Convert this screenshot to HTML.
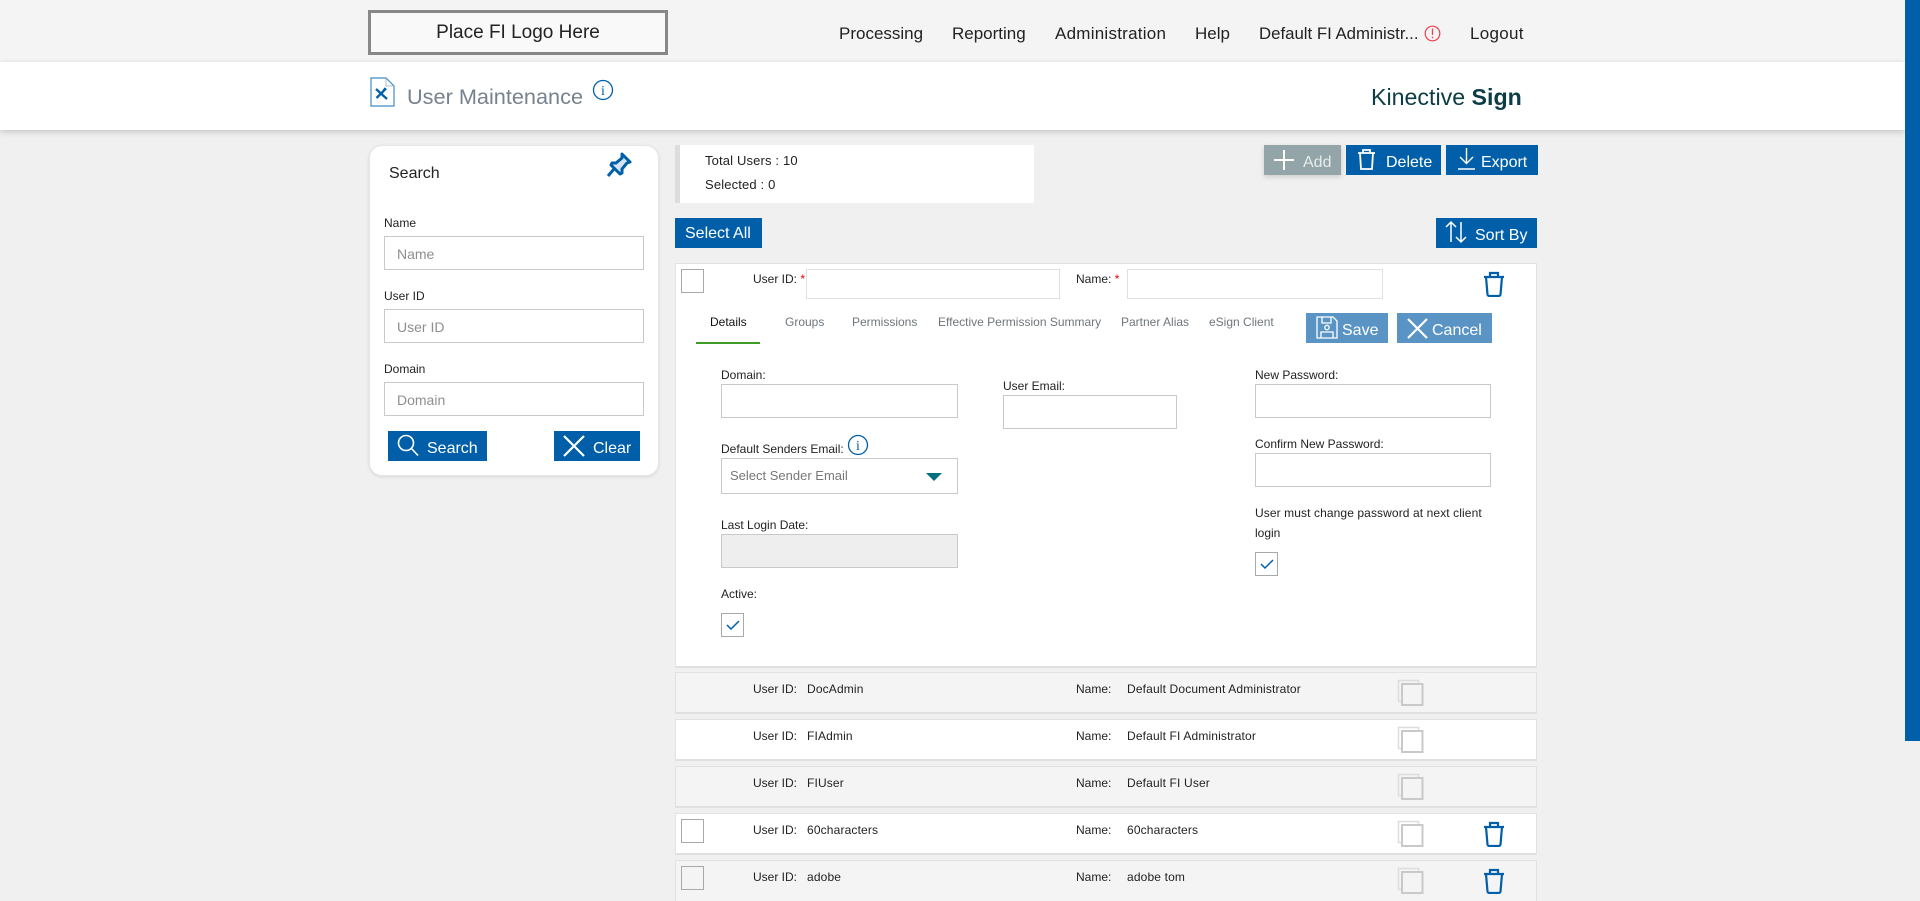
<!DOCTYPE html>
<html><head><meta charset="utf-8"><title>User Maintenance</title>
<style>
html,body{margin:0;padding:0;width:1920px;height:901px;overflow:hidden;background:#f0f0f0}
body{position:relative;font-family:"Liberation Sans",sans-serif;color:#222}
.a,.t,.in,.btn,.row,.cb,svg.i{position:absolute}
.t{white-space:nowrap;line-height:16px;font-size:12px;color:#222}
.in{box-sizing:border-box;background:#fff;border:1px solid #c9c9c9}
.in2{border:1px solid #e0e0e0}
.btn{background:#005fa8;color:#fff;font-size:16px;line-height:30px;height:30px;white-space:nowrap}
.btn span{position:absolute;top:3px;white-space:nowrap}
.row{left:675px;width:862px;height:42px;box-sizing:border-box;border:1px solid #e2e2e2;border-bottom:2px solid #e0e0e0;background:#fff}
.g{background:#f4f4f4}
.cb{box-sizing:border-box;width:23px;height:24px;border:1px solid #a9a9a9;background:transparent}
.star{color:#e00;font-size:12px}
.tab{color:#6f767c;font-size:12px}
.ph{color:#8f8f8f;font-size:14px}
.nav{font-size:17px;color:#222;top:26px}
.v{letter-spacing:.15px}
</style></head><body>
<div class="a" style="left:0;top:0;width:1905px;height:62px;background:#f4f4f4"></div>
<div class="a" style="left:0;top:62px;width:1905px;height:68px;background:#fff;box-shadow:0 2px 6px rgba(0,0,0,.18)"></div>
<div class="a" style="left:1905px;top:0;width:15px;height:741px;background:#005fa8"></div>

<div class="a" style="left:368px;top:10px;width:300px;height:45px;box-sizing:border-box;border:3px solid #888;background:#f9f9f9;text-align:center;font-size:19px;line-height:40px;color:#222">Place FI Logo Here</div>
<div class="t nav" style="left:839px">Processing</div>
<div class="t nav" style="left:952px">Reporting</div>
<div class="t nav" style="left:1055px;letter-spacing:.25px">Administration</div>
<div class="t nav" style="left:1195px">Help</div>
<div class="t nav" style="left:1259px;font-size:16.8px">Default FI Administr...</div>
<svg class="i" style="left:1424px;top:25px" width="17" height="17" viewBox="0 0 17 17"><circle cx="8.500" cy="8.500" r="7.300" fill="none" stroke="#f0404a" stroke-width="1.200"/><path d="M8.500 3.500v6.500M8.500 11.700v1.600" stroke="#f0404a" stroke-width="1.300"/></svg>
<div class="t nav" style="left:1470px;letter-spacing:.3px">Logout</div>

<svg class="i" style="left:370px;top:77px" width="25" height="30" viewBox="0 0 25 30"><path d="M1 1h15l8 8v20H1z" fill="#fff" stroke="#3f8ec9" stroke-width="1.200"/><path d="M16 1v8h8" fill="none" stroke="#9ab" stroke-width=".8"/><path d="M6 12l11 10M6.500 21L16 11.500M12 16l3.500-5" stroke="#005fa8" stroke-width="2.300"/></svg>
<div class="t" style="left:407px;top:84px;font-size:21.700px;line-height:26px;color:#76838d">User Maintenance</div>
<svg class="i" style="left:592px;top:79px" width="22" height="22" viewBox="0 0 22 22"><circle cx="11" cy="11" r="9.500" fill="none" stroke="#005fa8" stroke-width="1.300"/><text x="11" y="16" text-anchor="middle" font-family="Liberation Serif" font-size="14" fill="#005fa8">i</text></svg>
<div class="t" style="left:1371px;top:83px;font-size:23.200px;line-height:28px;color:#0c3c46">Kinective <b>Sign</b></div>

<!-- search -->
<div class="a" style="left:369px;top:145px;width:290px;height:331px;box-sizing:border-box;background:#fff;border:1px solid #e6e6e6;border-radius:13px;box-shadow:0 1px 3px rgba(0,0,0,.1)"></div>
<div class="t" style="left:389px;top:165px;font-size:16px;margin-top:1px">Search</div>
<svg class="i" style="left:605px;top:151px" width="28" height="28" viewBox="0 0 28 28"><path d="M17 3l8 8-3 1-5 6 0 4-2 1-9-9 1-2 4 0 6-5zM9 18l-6 7" fill="#d5e4f0" stroke="#005fa8" stroke-width="3" stroke-linejoin="round"/></svg>
<div class="t" style="left:384px;top:215px">Name</div>
<div class="in" style="left:384px;top:236px;width:260px;height:34px"></div>
<div class="t ph" style="left:397px;top:246px">Name</div>
<div class="t" style="left:384px;top:288px">User ID</div>
<div class="in" style="left:384px;top:309px;width:260px;height:34px"></div>
<div class="t ph" style="left:397px;top:319px">User ID</div>
<div class="t" style="left:384px;top:361px">Domain</div>
<div class="in" style="left:384px;top:382px;width:260px;height:34px"></div>
<div class="t ph" style="left:397px;top:392px">Domain</div>
<div class="btn" style="left:388px;top:431px;width:99px"><svg class="i" style="left:8px;top:2px" width="24" height="24" viewBox="0 0 24 24"><circle cx="10" cy="10" r="7.500" fill="none" stroke="#fff" stroke-width="1.600"/><path d="M15.500 15.500l6.500 7" stroke="#fff" stroke-width="1.600"/></svg><span style="left:39px">Search</span></div>
<div class="btn" style="left:554px;top:431px;width:86px"><svg class="i" style="left:9px;top:4px" width="22" height="22" viewBox="0 0 22 22"><path d="M1 1l20 20M21 1L1 21" stroke="#fff" stroke-width="2.200"/></svg><span style="left:39px">Clear</span></div>

<!-- stats -->
<div class="a" style="left:675px;top:145px;width:359px;height:58px;box-sizing:border-box;background:#fff;border-left:5px solid #ddd"></div>
<div class="t" style="left:705px;top:152px;font-size:13px;letter-spacing:.15px;margin-top:1px">Total Users : 10</div>
<div class="t" style="left:705px;top:176px;font-size:13px;letter-spacing:.15px;margin-top:1px">Selected : 0</div>

<div class="btn" style="left:1264px;top:145px;width:77px;background:#93a5a8;box-shadow:0 2px 5px rgba(0,0,0,.15)"><svg class="i" style="left:9px;top:4px" width="22" height="22" viewBox="0 0 22 22"><path d="M11 1v20M1 11h20" stroke="#fff" stroke-width="2"/></svg><span style="left:39px;color:#e6ecec">Add</span></div>
<div class="btn" style="left:1346px;top:145px;width:95px"><svg class="i" style="left:11px;top:3px" width="19" height="23" viewBox="0 0 19 23"><path d="M3 5l1 16h11l1-16M1 5h17M6 5V2h7v3" fill="none" stroke="#fff" stroke-width="1.800"/></svg><span style="left:40px">Delete</span></div>
<div class="btn" style="left:1446px;top:145px;width:92px"><svg class="i" style="left:11px;top:2px" width="19" height="24" viewBox="0 0 19 24"><path d="M9.500 1v15M3 10l6.500 6.500L16 10M1 22h17" fill="none" stroke="#fff" stroke-width="1.400"/></svg><span style="left:35px">Export</span></div>
<div class="btn" style="left:675px;top:218px;width:87px"><span style="left:10px;top:1px">Select All</span></div>
<div class="btn" style="left:1436px;top:218px;width:101px"><svg class="i" style="left:9px;top:2px" width="22" height="24" viewBox="0 0 22 24"><path d="M6 22V2M1 7l5-5 5 5M16 2v20M11 17l5 5 5-5" fill="none" stroke="#fff" stroke-width="1.500"/></svg><span style="left:39px">Sort By</span></div>

<!-- edit card -->
<div class="a" style="left:675px;top:263px;width:862px;height:405px;box-sizing:border-box;background:#fff;border:1px solid #e2e2e2;border-bottom:2px solid #e0e0e0"></div>
<div class="cb" style="left:681px;top:269px"></div>
<div class="t" style="left:753px;top:271px">User ID: <span class="star">*</span></div>
<div class="in in2" style="left:806px;top:269px;width:254px;height:30px"></div>
<div class="t" style="left:1076px;top:271px">Name: <span class="star">*</span></div>
<div class="in in2" style="left:1127px;top:269px;width:256px;height:30px"></div>
<svg class="i" style="left:1483px;top:271px" width="22" height="26" viewBox="0 0 22 26"><path d="M3 6l1.500 17.500c0 1 1 1.500 2 1.500h9c1 0 2-.5 2-1.500L19 6M1 6h20M7 6V2h8v4" fill="none" stroke="#005fa8" stroke-width="2.200"/></svg>

<div class="t" style="left:710px;top:314px;color:#111">Details</div>
<div class="t tab" style="left:785px;top:314px">Groups</div>
<div class="t tab" style="left:852px;top:314px">Permissions</div>
<div class="t tab" style="left:938px;top:314px">Effective Permission Summary</div>
<div class="t tab" style="left:1121px;top:314px">Partner Alias</div>
<div class="t tab" style="left:1209px;top:314px">eSign Client</div>
<div class="a" style="left:696px;top:342px;width:64px;height:2px;background:#3f9a26"></div>

<div class="btn" style="left:1306px;top:313px;width:82px;background:#5a94c5"><svg class="i" style="left:10px;top:3px" width="22" height="23" viewBox="0 0 22 23"><path d="M1 1h16l4 4v17H1zM6 1v6h9V1M5 22v-6h12v6" fill="none" stroke="#fff" stroke-width="1.300"/><circle cx="11" cy="11.500" r="2.200" fill="none" stroke="#fff" stroke-width="1.300"/></svg><span style="left:36px">Save</span></div>
<div class="btn" style="left:1397px;top:313px;width:95px;background:#5a94c5"><svg class="i" style="left:10px;top:5px" width="21" height="21" viewBox="0 0 21 21"><path d="M1 1l19 19M20 1L1 20" stroke="#fff" stroke-width="2.200"/></svg><span style="left:35px">Cancel</span></div>

<div class="t" style="left:721px;top:367px">Domain:</div>
<div class="in" style="left:721px;top:384px;width:237px;height:34px"></div>
<div class="t" style="left:1003px;top:378px">User Email:</div>
<div class="in" style="left:1003px;top:395px;width:174px;height:34px"></div>
<div class="t" style="left:1255px;top:367px">New Password:</div>
<div class="in" style="left:1255px;top:384px;width:236px;height:34px"></div>
<div class="t" style="left:1255px;top:436px">Confirm New Password:</div>
<div class="in" style="left:1255px;top:453px;width:236px;height:34px"></div>
<div class="t v" style="left:1255px;top:505px;letter-spacing:.1px">User must change password at next client</div>
<div class="t" style="left:1255px;top:525px">login</div>
<div class="cb" style="left:1255px;top:552px"><svg class="i" style="left:4px;top:6px" width="14" height="10" viewBox="0 0 14 10"><path d="M1 5l4 4 8-8" fill="none" stroke="#005fa8" stroke-width="1.500"/></svg></div>

<div class="t" style="left:721px;top:441px">Default Senders Email:</div>
<svg class="i" style="left:847px;top:434px" width="22" height="22" viewBox="0 0 22 22"><circle cx="11" cy="11" r="9.500" fill="none" stroke="#005fa8" stroke-width="1.300"/><text x="11" y="16" text-anchor="middle" font-family="Liberation Serif" font-size="14" fill="#005fa8">i</text></svg>
<div class="in" style="left:721px;top:458px;width:237px;height:36px"></div>
<div class="t" style="left:730px;top:468px;color:#777;font-size:13px">Select Sender Email</div>
<div class="a" style="left:926px;top:473px;width:0;height:0;border-left:8px solid transparent;border-right:8px solid transparent;border-top:8px solid #00707f"></div>
<div class="t" style="left:721px;top:517px">Last Login Date:</div>
<div class="in" style="left:721px;top:534px;width:237px;height:34px;background:#eee"></div>
<div class="t" style="left:721px;top:586px">Active:</div>
<div class="cb" style="left:721px;top:613px"><svg class="i" style="left:4px;top:6px" width="14" height="10" viewBox="0 0 14 10"><path d="M1 5l4 4 8-8" fill="none" stroke="#005fa8" stroke-width="1.500"/></svg></div>

<!-- rows -->
<div class="row g" style="top:672px"></div>
<div class="t" style="left:753px;top:681px">User ID:</div><div class="t v" style="left:807px;top:681px">DocAdmin</div><div class="t" style="left:1076px;top:681px">Name:</div><div class="t v" style="left:1127px;top:681px">Default Document Administrator</div>
<div class="row" style="top:719px"></div>
<div class="t" style="left:753px;top:728px">User ID:</div><div class="t v" style="left:807px;top:728px">FIAdmin</div><div class="t" style="left:1076px;top:728px">Name:</div><div class="t v" style="left:1127px;top:728px">Default FI Administrator</div>
<div class="row g" style="top:766px"></div>
<div class="t" style="left:753px;top:775px">User ID:</div><div class="t v" style="left:807px;top:775px">FIUser</div><div class="t" style="left:1076px;top:775px">Name:</div><div class="t v" style="left:1127px;top:775px">Default FI User</div>
<div class="row" style="top:813px"></div>
<div class="cb" style="left:681px;top:819px"></div>
<div class="t" style="left:753px;top:822px">User ID:</div><div class="t v" style="left:807px;top:822px">60characters</div><div class="t" style="left:1076px;top:822px">Name:</div><div class="t v" style="left:1127px;top:822px">60characters</div>
<div class="row g" style="top:860px;height:50px"></div>
<div class="cb" style="left:681px;top:866px"></div>
<div class="t" style="left:753px;top:869px">User ID:</div><div class="t v" style="left:807px;top:869px">adobe</div><div class="t" style="left:1076px;top:869px">Name:</div><div class="t v" style="left:1127px;top:869px">adobe tom</div>

<svg class="i" style="left:1397px;top:679px" width="28" height="222" viewBox="0 0 28 222" stroke-width="1.500">
<g><rect x="1.500" y="1.500" width="20" height="21" fill="none" stroke="#ddd"/><rect x="5" y="5" width="20.500" height="21" fill="#f4f4f4" stroke="#c9c9c9" stroke-width="2"/></g>
<g transform="translate(0,47)"><rect x="1.500" y="1.500" width="20" height="21" fill="none" stroke="#ddd"/><rect x="5" y="5" width="20.500" height="21" fill="#fff" stroke="#c9c9c9" stroke-width="2"/></g>
<g transform="translate(0,94)"><rect x="1.500" y="1.500" width="20" height="21" fill="none" stroke="#ddd"/><rect x="5" y="5" width="20.500" height="21" fill="#f4f4f4" stroke="#c9c9c9" stroke-width="2"/></g>
<g transform="translate(0,141)"><rect x="1.500" y="1.500" width="20" height="21" fill="none" stroke="#ddd"/><rect x="5" y="5" width="20.500" height="21" fill="#fff" stroke="#c9c9c9" stroke-width="2"/></g>
<g transform="translate(0,188)"><rect x="1.500" y="1.500" width="20" height="21" fill="none" stroke="#ddd"/><rect x="5" y="5" width="20.500" height="21" fill="#f4f4f4" stroke="#c9c9c9" stroke-width="2"/></g>
</svg>
<svg class="i" style="left:1483px;top:821px" width="22" height="26" viewBox="0 0 22 26"><path d="M3 6l1.500 17.500c0 1 1 1.500 2 1.500h9c1 0 2-.5 2-1.500L19 6M1 6h20M7 6V2h8v4" fill="none" stroke="#005fa8" stroke-width="2.200"/></svg>
<svg class="i" style="left:1483px;top:868px" width="22" height="26" viewBox="0 0 22 26"><path d="M3 6l1.500 17.500c0 1 1 1.500 2 1.500h9c1 0 2-.5 2-1.500L19 6M1 6h20M7 6V2h8v4" fill="none" stroke="#005fa8" stroke-width="2.200"/></svg>
</body></html>
